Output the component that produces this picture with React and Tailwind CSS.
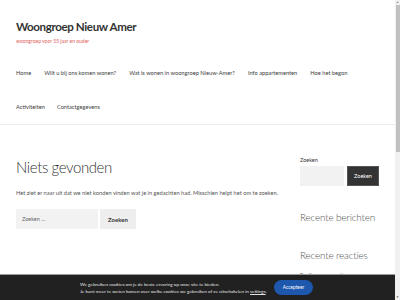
const nav1 = [
  'Home',
  'Wilt u bij ons komen wonen?',
  'Wat is wonen in woongroep Nieuw-Amer?',
  'Info appartementen',
  'Hoe het begon',
];
const nav2 = ['Activiteiten', 'Contactgegevens'];

function SearchForm() {
  return (
    <form className="flex gap-[2px]" onSubmit={(e) => e.preventDefault()}>
      <input
        className="w-[82px] h-[20px] bg-[#f2f2f2] px-[6px] text-[5.5px] text-[#555] placeholder-[#666] outline-none"
        placeholder="Zoeken …"
      />
      <button className="w-[36px] h-[20px] bg-[#eeeeee] text-[6px] font-bold text-[#333]">Zoeken</button>
    </form>
  );
}

export default function App() {
  return (
    <div className="relative w-[400px] h-[300px] overflow-hidden bg-white font-['Lato','Open_Sans',sans-serif] text-[#333]">
      <div className="flex h-full">
        <div className="w-[395px] h-full flex flex-col">
          {/* Header */}
          <header className="border-b border-[#ececec] pb-[12px]">
            <div className="px-[16px] pt-[17px]">
              <h1 className="text-[11.6px] leading-[20px] font-bold tracking-[-0.4px] text-[#333] whitespace-nowrap">Woongroep Nieuw Amer</h1>
              <p className="text-[5px] leading-[8px] text-[#e0605c] whitespace-nowrap">woongroep voor 55 jaar en ouder</p>
            </div>
            <nav className="px-[16px] pt-[23px] text-[5.7px] text-[#404040] whitespace-nowrap">
              <ul className="flex gap-[13px] h-[10px] items-center">
                {nav1.map((n) => (
                  <li key={n} className="shrink-0">{n}</li>
                ))}
              </ul>
              <ul className="flex gap-[12px] h-[10px] items-center mt-[24px]">
                {nav2.map((n) => (
                  <li key={n} className="shrink-0">{n}</li>
                ))}
              </ul>
            </nav>
          </header>

          {/* Content */}
          <div className="flex px-[16px] pt-[31px]">
            <main className="w-[260px]">
              <h2 className="text-[15px] leading-[22px] font-light text-[#333] tracking-[-0.4px] whitespace-nowrap">Niets gevonden</h2>
              <p className="mt-[11px] text-[5.7px] leading-[8px] text-[#555] whitespace-nowrap">
                Het ziet er naar uit dat we niet konden vinden wat je in gedachten had. Misschien helpt het om te zoeken.
              </p>
              <div className="mt-[12px]">
                <SearchForm />
              </div>
            </main>
            <aside className="ml-auto w-[79px]">
              <div className="text-[5.5px] leading-[8px] text-[#333]">Zoeken</div>
              <div className="flex gap-[3px] mt-[2px]">
                <input className="w-[44px] h-[20px] bg-[#f2f2f2] outline-none" />
                <button className="w-[32px] h-[20px] bg-[#333] border border-[#555] text-[5.5px] text-white">Zoeken</button>
              </div>
              <h3 className="mt-[24px] text-[10px] leading-[14px] font-light text-[#555] tracking-[-0.2px] whitespace-nowrap">Recente berichten</h3>
              <h3 className="mt-[24px] text-[10px] leading-[14px] font-light text-[#555] tracking-[-0.2px] whitespace-nowrap">Recente reacties</h3>
              <p className="mt-[9px] text-[5.5px] text-[#555] whitespace-nowrap">Er zijn geen reacties</p>
            </aside>
          </div>
        </div>

        {/* Scrollbar */}
        <div className="w-[5px] h-full bg-[#f1f1f1] flex flex-col items-center">
          <div className="h-[5px] text-[3px] leading-[5px] text-[#777]">▲</div>
          <div className="w-[4px] h-[147px] bg-[#c1c1c1]" />
          <div className="flex-1" />
          <div className="h-[5px] text-[3px] leading-[5px] text-[#555]">▼</div>
        </div>
      </div>

      {/* Cookie bar */}
      <div className="absolute left-0 bottom-0 w-[395px] h-[26px] bg-[#212121] border-t border-[#9a9a9a] flex items-center">
        <div className="ml-[80px] text-[4.6px] leading-[7px] text-[#e5e5e5]">
          <p>We gebruiken cookies om je de beste ervaring op onze site te bieden.</p>
          <p>
            Je kunt meer te weten komen over welke cookies we gebruiken of ze uitschakelen in{' '}
            <span className="underline">settings</span>.
          </p>
        </div>
        <button className="ml-auto mr-[82px] w-[39px] h-[15px] rounded-full bg-[#1d57ae] text-[4.8px] text-white">
          Accepteer
        </button>
      </div>
    </div>
  );
}
